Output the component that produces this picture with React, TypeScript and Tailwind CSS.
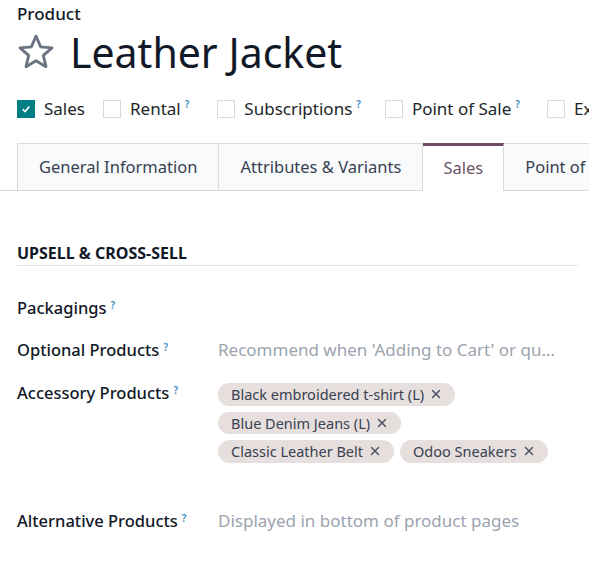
import React from 'react';
import { X } from 'lucide-react';

const Help = () => (
  <sup className="ml-[4px] text-[10px] font-semibold text-[#3b8cc4]">?</sup>
);

const Check = ({ checked, label, help, gap = 'mr-[18px]' }: { checked?: boolean; label: string; help?: boolean; gap?: string }) => (
  <div className={`flex items-center shrink-0 ${gap}`}>
    {checked ? (
      <span className="h-[18px] w-[18px] bg-[#017e84] flex items-center justify-center">
        <svg viewBox="0 0 12 12" className="h-[10px] w-[10px]">
          <path d="M2 6.3 L4.8 9 L10 3.2" fill="none" stroke="white" strokeWidth="2" />
        </svg>
      </span>
    ) : (
      <span className="h-[18px] w-[18px] border border-[#d8dadd] bg-white" />
    )}
    <span className="ml-[9px] text-[17px] text-[#212529]">{label}</span>
    {help && <Help />}
  </div>
);

const Tag = ({ name }: { name: string }) => (
  <span className="inline-flex items-center h-[22.5px] rounded-full bg-[#e7dfdd] pl-[13px] pr-[12px] text-[14.5px] text-[#374151] mr-[6px] mb-[6px]">
    {name}
    <X className="ml-[5px] h-[14px] w-[14px] text-[#4b5563]" strokeWidth={2.5} />
  </span>
);

const Row = ({ label, children, className = '' }: { label: string; children?: React.ReactNode; className?: string }) => (
  <div className={`flex ${className}`}>
    <div className="w-[201px] shrink-0 text-[16.5px] leading-[24px] text-[#111827] font-medium">
      {label}
      <Help />
    </div>
    <div className="flex-1 min-w-0 leading-[24px]">{children}</div>
  </div>
);

export default function App() {
  return (
    <div
      className="w-[589px] h-[566px] overflow-hidden bg-white whitespace-nowrap"
      style={{ fontFamily: '"Noto Sans", sans-serif' }}
    >
      <div className="pl-[17px] pt-[4px]">
        <div className="text-[17px] font-medium text-[#111827] leading-[20px]">Product</div>
        <div className="flex items-center mt-[7px] h-[42px]">
          <svg viewBox="0 0 24 24" className="h-[40px] w-[40px] -ml-[1px]">
            <path
              d="M12 2.5 L14.8 8.9 L21.6 9.5 L16.4 14 L18 20.8 L12 17.2 L6 20.8 L7.6 14 L2.4 9.5 L9.2 8.9 Z"
              fill="none"
              stroke="#6b7280"
              strokeWidth="1.7"
              strokeLinejoin="round"
            />
          </svg>
          <h1 className="ml-[14px] text-[41px] leading-none text-[#111827]">Leather Jacket</h1>
        </div>
        <div className="flex items-center mt-[24px] h-[24px]">
          <Check checked label="Sales" />
          <Check label="Rental" help gap="mr-[28px]" />
          <Check label="Subscriptions" help gap="mr-[24px]" />
          <Check label="Point of Sale" help gap="mr-[27px]" />
          <Check label="Expenses" />
        </div>
      </div>

      <div className="mt-[22px] flex border-b border-[#d8dadd] pl-[17px] h-[48px]">
        <div className="px-[21px] flex items-center bg-[#f9fafb] border border-b-0 border-[#d8dadd] text-[16.5px] text-[#374151]">General Information</div>
        <div className="px-[21px] flex items-center bg-[#f9fafb] border border-l-0 border-b-0 border-[#d8dadd] text-[16.5px] text-[#374151]">Attributes & Variants</div>
        <div className="relative -mb-px px-[20px] flex items-center bg-white border-r border-[#d8dadd] border-t-[3px] border-t-[#714b67] text-[16.5px] text-[#6b5467]">Sales</div>
        <div className="px-[21px] flex items-center bg-[#f9fafb] border border-l-0 border-b-0 border-[#d8dadd] text-[16.5px] text-[#374151]">Point of Sale</div>
      </div>

      <div className="pl-[17px] pr-[11px]">
        <div className="mt-[51px] pb-[1px] leading-[22px] border-b border-[#e2e4e7] text-[16px] font-bold text-[#111827] uppercase">Upsell & Cross-sell</div>

        <Row label="Packagings" className="mt-[30px]" />
        <Row label="Optional Products" className="mt-[18px]">
          <span className="text-[17px] text-[#9ca3af]">Recommend when 'Adding to Cart' or qu…</span>
        </Row>
        <Row label="Accessory Products" className="mt-[19px]">
          <div className="flex flex-wrap w-[345px] pt-[2px]">
            <Tag name="Black embroidered t-shirt (L)" />
            <Tag name="Blue Denim Jeans (L)" />
            <Tag name="Classic Leather Belt" />
            <Tag name="Odoo Sneakers" />
          </div>
        </Row>
        <Row label="Alternative Products" className="mt-[40px]">
          <span className="text-[17px] text-[#9ca3af]">Displayed in bottom of product pages</span>
        </Row>
      </div>
    </div>
  );
}
